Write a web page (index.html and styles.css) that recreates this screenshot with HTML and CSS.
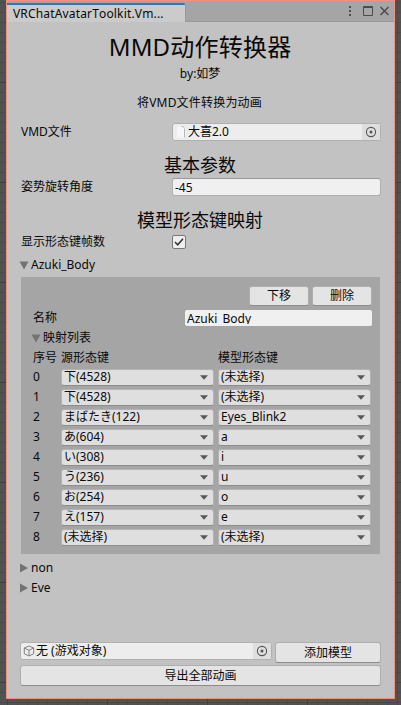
FILE: index.html
```html
<!DOCTYPE html>
<html lang="zh-CN">
<head>
<meta charset="utf-8">
<title>MMD动作转换器</title>
<link rel="stylesheet" href="styles.css">
</head>
<body>
<svg class="defs" width="0" height="0">
  <symbol id="picker" viewBox="0 0 12 12"><circle cx="6" cy="6" r="4.6" fill="none" stroke="#555" stroke-width="1.1"/><circle cx="6" cy="6" r="1.5" fill="#555"/></symbol>
  <symbol id="caret" viewBox="0 0 8 5"><path d="M0 .3h8L4 4.7z" fill="#585854"/></symbol>
  <symbol id="open" viewBox="0 0 10 9"><path d="M.5.5h9L5 8.5z" fill="#737373"/></symbol>
  <symbol id="closed" viewBox="0 0 9 10"><path d="M.5.5v9l8-4.5z" fill="#737373"/></symbol>
</svg>
<main class="window">
  <header class="tabbar">
    <div class="tab">VRChatAvatarToolkit.Vm...</div>
    <svg class="controls" width="42" height="12" viewBox="0 0 42 12" fill="none" stroke="#4c4c4c">
      <path d="M3 1v2M3 5v2M3 9v2" stroke-width="2"/>
      <path d="M16.500 1.500h9v9h-9zM16 2.500h10" />
      <path d="M33.500 2l8 8M41.500 2l-8 8" stroke-width="1.500"/>
    </svg>
  </header>
  <div class="content">
    <h1>MMD动作转换器</h1>
    <p class="author">by:如梦</p>
    <p class="desc">将VMD文件转换为动画</p>
    <div class="row">
      <span class="label">VMD文件</span>
      <div class="field object">
        <svg class="file" width="12" height="14" viewBox="0 0 12 14"><path d="M1 1.500h6l2.500 2.500v8.500H1z" fill="#f6f6f6"/><path d="M5.500 1.500H7l1.500 2v9" fill="none" stroke="#a8a8a8" stroke-width=".8"/></svg>
        <span>大喜2.0</span>
        <span class="pick"><svg width="12" height="12"><use href="#picker"/></svg></span>
      </div>
    </div>
    <h2>基本参数</h2>
    <div class="row">
      <span class="label">姿势旋转角度</span>
      <div class="field input">-45</div>
    </div>
    <h2>模型形态键映射</h2>
    <div class="row toggle">
      <span class="label">显示形态键帧数</span>
      <span class="check"><svg width="10" height="10" viewBox="0 0 10 10"><path d="M1 5l2.700 2.800L9 1.800" fill="none" stroke="#333" stroke-width="1.500"/></svg></span>
    </div>
    <div class="fold first"><svg width="10" height="9"><use href="#open"/></svg>Azuki_Body</div>
    <section class="box">
      <div class="actions"><div class="button">下移</div><div class="button">删除</div></div>
      <div class="name"><span>名称</span><div class="nameinput"><span>Azuki_Body</span></div></div>
      <div class="fold inner"><svg width="10" height="9"><use href="#open"/></svg>映射列表</div>
      <div class="map head"><span>序号</span><span>源形态键</span><span>模型形态键</span></div>
      <div class="map"><span>0</span><div class="drop">下(4528)<svg width="8" height="5"><use href="#caret"/></svg></div><div class="drop">(未选择)<svg width="8" height="5"><use href="#caret"/></svg></div></div>
      <div class="map"><span>1</span><div class="drop">下(4528)<svg width="8" height="5"><use href="#caret"/></svg></div><div class="drop">(未选择)<svg width="8" height="5"><use href="#caret"/></svg></div></div>
      <div class="map"><span>2</span><div class="drop">まばたき(122)<svg width="8" height="5"><use href="#caret"/></svg></div><div class="drop">Eyes_Blink2<svg width="8" height="5"><use href="#caret"/></svg></div></div>
      <div class="map"><span>3</span><div class="drop">あ(604)<svg width="8" height="5"><use href="#caret"/></svg></div><div class="drop">a<svg width="8" height="5"><use href="#caret"/></svg></div></div>
      <div class="map"><span>4</span><div class="drop">い(308)<svg width="8" height="5"><use href="#caret"/></svg></div><div class="drop">i<svg width="8" height="5"><use href="#caret"/></svg></div></div>
      <div class="map"><span>5</span><div class="drop">う(236)<svg width="8" height="5"><use href="#caret"/></svg></div><div class="drop">u<svg width="8" height="5"><use href="#caret"/></svg></div></div>
      <div class="map"><span>6</span><div class="drop">お(254)<svg width="8" height="5"><use href="#caret"/></svg></div><div class="drop">o<svg width="8" height="5"><use href="#caret"/></svg></div></div>
      <div class="map"><span>7</span><div class="drop">え(157)<svg width="8" height="5"><use href="#caret"/></svg></div><div class="drop">e<svg width="8" height="5"><use href="#caret"/></svg></div></div>
      <div class="map"><span>8</span><div class="drop">(未选择)<svg width="8" height="5"><use href="#caret"/></svg></div><div class="drop">(未选择)<svg width="8" height="5"><use href="#caret"/></svg></div></div>
    </section>
    <div class="folds">
      <div class="fold"><svg width="9" height="10"><use href="#closed"/></svg>non</div>
      <div class="fold"><svg width="9" height="10"><use href="#closed"/></svg>Eve</div>
    </div>
    <footer>
      <div class="add">
        <div class="field object">
          <svg class="cube" width="12" height="12" viewBox="0 0 12 12" fill="none" stroke="#777" stroke-width=".9"><path d="M6 1l4.700 2v5.700L6 11 1.300 8.700V3zM1.300 3L6 5.300 10.700 3M6 5.300V11"/></svg>
          <span>无 (游戏对象)</span>
          <span class="pick"><svg width="12" height="12"><use href="#picker"/></svg></span>
        </div>
        <div class="button">添加模型</div>
      </div>
      <div class="button export">导出全部动画</div>
    </footer>
  </div>
</main>
</body>
</html>
```
FILE: styles.css
```css
* { box-sizing: border-box; }
body {
  margin: 0;
  height: 705px;
  overflow: hidden;
  padding: 0 6px;
  font: 12px/18px "Noto Sans", "Noto Sans CJK SC", sans-serif;
  font-kerning: none;
  color: #090909;
  background-color: #525250;
  background-image:
    linear-gradient(#414141 1px, transparent 1px),
    linear-gradient(90deg, #414141 1px, transparent 1px),
    linear-gradient(#4a4a4a 1px, transparent 1px),
    linear-gradient(90deg, #4a4a4a 1px, transparent 1px);
  background-size: 100px 100px, 100px 100px, 10px 10px, 10px 10px;
  background-position: 0 82px, 7px 0, 0 2px, 7px 0;
}
.defs { position: absolute; }
svg { display: block; flex: none; }
h1, h2, p { margin: 0; font-weight: 400; text-align: center; white-space: nowrap; }
.window {
  width: 389px;
  height: 699px;
  border: 1px solid #f0907f;
  background: #c2c2c2;
}
.tabbar {
  display: flex;
  justify-content: space-between;
  height: 21px;
  padding-top: 2px;
  background: #a5a5a5;
  border-bottom: 1px solid #999;
}
.tab {
  width: 178px;
  height: 19px;
  padding-left: 6px;
  line-height: 17px;
  letter-spacing: .16px;
  border-top: 2px solid #3a72b0;
  border-radius: 0 2px 0 0;
  background: #cbcbcb;
  box-shadow: 1px 0 #999;
}
.controls { margin: 2px 5px 0 0; }
.content { display: flex; flex-direction: column; height: 676px; padding: 0 14px; }
h1 { height: 42px; margin-top: 4px; padding-right: 1px; font-size: 24px; line-height: 42px; letter-spacing: .2px; }
.author { height: 18px; margin-top: -3px; padding-right: 1px; }
.desc { margin-top: 11px; height: 18px; letter-spacing: .2px; padding-right: 2px; }
.row { display: flex; align-items: center; height: 18px; margin-right: -1px; }
.desc + .row { margin-top: 11px; }
.label { width: 151px; white-space: nowrap; }
.field {
  display: flex;
  align-items: center;
  flex: 1;
  height: 18px;
  border: 1px solid #b0b0b0;
  border-radius: 3px;
  background: #ededed;
}
.input { border-top-color: #999; background: #f0f0f0; padding: 2px 0 0 2px; }
.file { margin-left: 3px; }
.cube { margin: 0 1px 0 2px; }
.pick {
  display: flex;
  align-items: center;
  justify-content: center;
  width: 18px;
  height: 16px;
  margin-left: auto;
  background: #dedede;
  border-radius: 0 2px 2px 0;
}
h2 { height: 26px; margin: 11px 0 0; padding-right: 1px; font-size: 18px; line-height: 26px; }
.check {
  display: flex;
  align-items: center;
  justify-content: center;
  width: 14px;
  height: 14px;
  border: 1px solid #777;
  border-radius: 2px;
  background: #eee;
}
.fold { display: flex; align-items: center; gap: 2px; height: 20px; margin-left: -2px; }
.fold svg { width: 10px; }
.first { margin-top: 4px; }
.box { height: 277px; margin-top: 2px; padding: 9px 8px 0 12px; background: #a5a5a5; }
.actions { display: flex; justify-content: flex-end; gap: 3px; }
.button {
  display: flex;
  align-items: center;
  justify-content: center;
  width: 60px;
  height: 20px;
  border: 1px solid #aeaeae;
  border-bottom-color: #8c8c8c;
  border-radius: 3px;
  background: #e4e4e4;
}
.name { display: flex; justify-content: space-between; align-items: center; height: 17px; margin-top: 3px; }
.nameinput { width: 187px; height: 16px; padding-left: 2px; border-radius: 2px; background: #f0f0f0; }
.nameinput span { display: block; height: 14px; overflow: hidden; line-height: 17px; }
.inner { margin-top: 2px; }
.map {
  display: grid;
  grid-template-columns: 24px 153px 153px;
  column-gap: 4px;
  align-items: center;
  height: 20px;
  white-space: nowrap;
}
.head { height: 19px; }
.drop {
  display: flex;
  align-items: center;
  justify-content: space-between;
  height: 17px;
  padding: 0 5px 0 2px;
  border-radius: 3px;
  background: #dfdfdf;
  border: 1px solid #b3b3b3;
  border-bottom-color: #8c8c8c;
}
.folds { margin-top: 4px; }
footer { margin: auto -1px 0; padding-bottom: 12px; }
.add { display: flex; gap: 3px; margin-bottom: 2px; }
.add .button { width: 106px; height: 21px; }
.button.export { width: 100%; height: 21px; }
```
